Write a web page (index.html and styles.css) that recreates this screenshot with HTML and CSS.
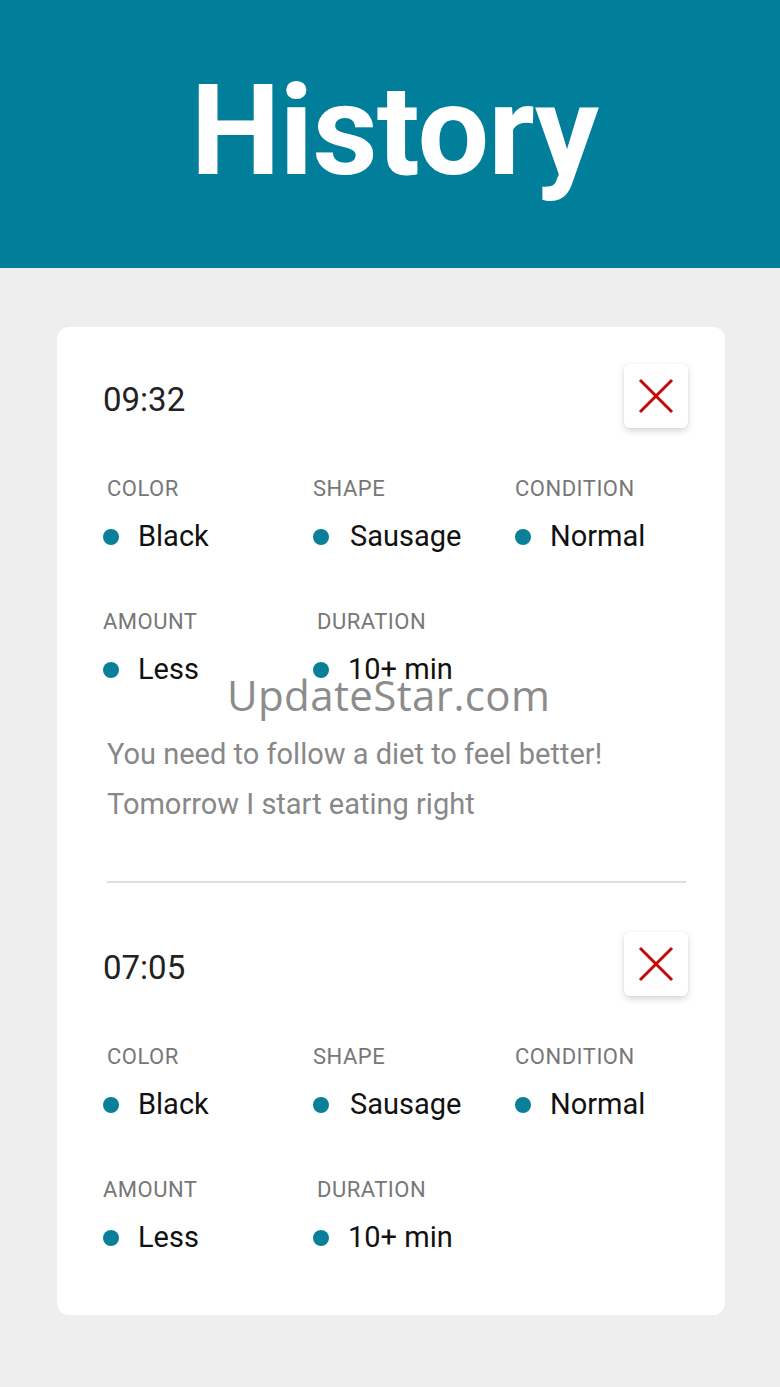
FILE: index.html
```html
<!DOCTYPE html>
<html lang="en">
<head>
<meta charset="utf-8">
<title>History</title>
<link rel="stylesheet" href="styles.css">
</head>
<body>
<header class="topbar">
  <h1 class="title">History</h1>
</header>
<main class="page">
  <section class="card">
    <article class="entry">
      <div class="entry-head">
        <span class="time">09:32</span>
        <button class="delete" aria-label="Delete">
          <svg width="36" height="36" viewBox="0 0 36 36"><path d="M2 2 L34 34 M34 2 L2 34" stroke="#c80808" stroke-width="3" fill="none"/></svg>
        </button>
      </div>
      <div class="grid">
        <div class="field"><div class="label inset">COLOR</div><div class="value"><span class="dot"></span>Black</div></div>
        <div class="field"><div class="label">SHAPE</div><div class="value"><span class="dot"></span><span class="wide">Sausage</span></div></div>
        <div class="field"><div class="label">CONDITION</div><div class="value"><span class="dot"></span>Normal</div></div>
        <div class="field"><div class="label">AMOUNT</div><div class="value"><span class="dot"></span>Less</div></div>
        <div class="field"><div class="label inset">DURATION</div><div class="value"><span class="dot"></span>10+ min</div></div>
      </div>
      <div class="notes">
        <p>You need to follow a diet to feel better!</p>
        <p>Tomorrow I start eating right</p>
      </div>
    </article>
    <hr class="divider">
    <article class="entry">
      <div class="entry-head">
        <span class="time">07:05</span>
        <button class="delete" aria-label="Delete">
          <svg width="36" height="36" viewBox="0 0 36 36"><path d="M2 2 L34 34 M34 2 L2 34" stroke="#c80808" stroke-width="3" fill="none"/></svg>
        </button>
      </div>
      <div class="grid">
        <div class="field"><div class="label inset">COLOR</div><div class="value"><span class="dot"></span>Black</div></div>
        <div class="field"><div class="label">SHAPE</div><div class="value"><span class="dot"></span><span class="wide">Sausage</span></div></div>
        <div class="field"><div class="label">CONDITION</div><div class="value"><span class="dot"></span>Normal</div></div>
        <div class="field"><div class="label">AMOUNT</div><div class="value"><span class="dot"></span>Less</div></div>
        <div class="field"><div class="label inset">DURATION</div><div class="value"><span class="dot"></span>10+ min</div></div>
      </div>
    </article>
    <div class="watermark">UpdateStar.com</div>
  </section>
</main>
</body>
</html>
```

FILE: styles.css
```css
* { box-sizing: border-box; }

html, body {
  margin: 0;
  padding: 0;
}

body {
  background: #eeeeee;
  font-family: Roboto, "Liberation Sans", Arial, sans-serif;
  width: 780px;
  min-height: 1387px;
}

.topbar {
  background: #017e99;
  height: 268px;
  padding-top: 56px;
}

.title {
  margin: 0;
  text-align: center;
  color: #ffffff;
  font-size: 127px;
  font-weight: 700;
  line-height: 150px;
  letter-spacing: -0.8px;
  padding-left: 9px;
}

.page {
  padding: 59px 55px 72px 57px;
}

.card {
  position: relative;
  background: #ffffff;
  border-radius: 12px;
  padding: 37px 37px 61px 46px;
}

.entry-head {
  display: flex;
  align-items: center;
  justify-content: space-between;
  height: 64px;
}

.time {
  font-size: 33px;
  color: #222222;
  margin-top: 6px;
}

.delete {
  width: 64px;
  height: 64px;
  border: 0;
  padding: 0;
  margin: 0;
  background: #ffffff;
  border-radius: 6px;
  box-shadow: 0 3px 6px rgba(0, 0, 0, 0.16), 0 0 2px rgba(0, 0, 0, 0.06);
  display: flex;
  align-items: center;
  justify-content: center;
}

.grid {
  display: grid;
  grid-template-columns: 210px 202px 1fr;
  row-gap: 56px;
  margin-top: 48px;
}

.label {
  font-size: 22px;
  line-height: 26px;
  color: #777777;
  letter-spacing: 0.5px;
}

.label.inset {
  padding-left: 4px;
}

.value {
  display: flex;
  align-items: center;
  margin-top: 17px;
  height: 34px;
  font-size: 29px;
  line-height: 34px;
  color: #111111;
}

.dot {
  width: 16px;
  height: 16px;
  border-radius: 50%;
  background: #0a7f99;
  margin-right: 19px;
  flex: none;
  position: relative;
  top: 1px;
}

.wide {
  margin-left: 2px;
}

.notes {
  margin-top: 43px;
  padding-left: 4px;
}

.notes p {
  margin: 0;
  font-size: 29px;
  line-height: 50px;
  color: #888888;
}

.divider {
  border: 0;
  height: 2px;
  background: #dedede;
  margin: 52px 2px 49px 4px;
}

.watermark {
  position: absolute;
  left: 170px;
  top: 347px;
  font-family: "Open Sans", "Noto Sans", sans-serif;
  font-size: 42px;
  line-height: 42px;
  letter-spacing: 0.4px;
  color: #8c8c8c;
  white-space: nowrap;
}
```
